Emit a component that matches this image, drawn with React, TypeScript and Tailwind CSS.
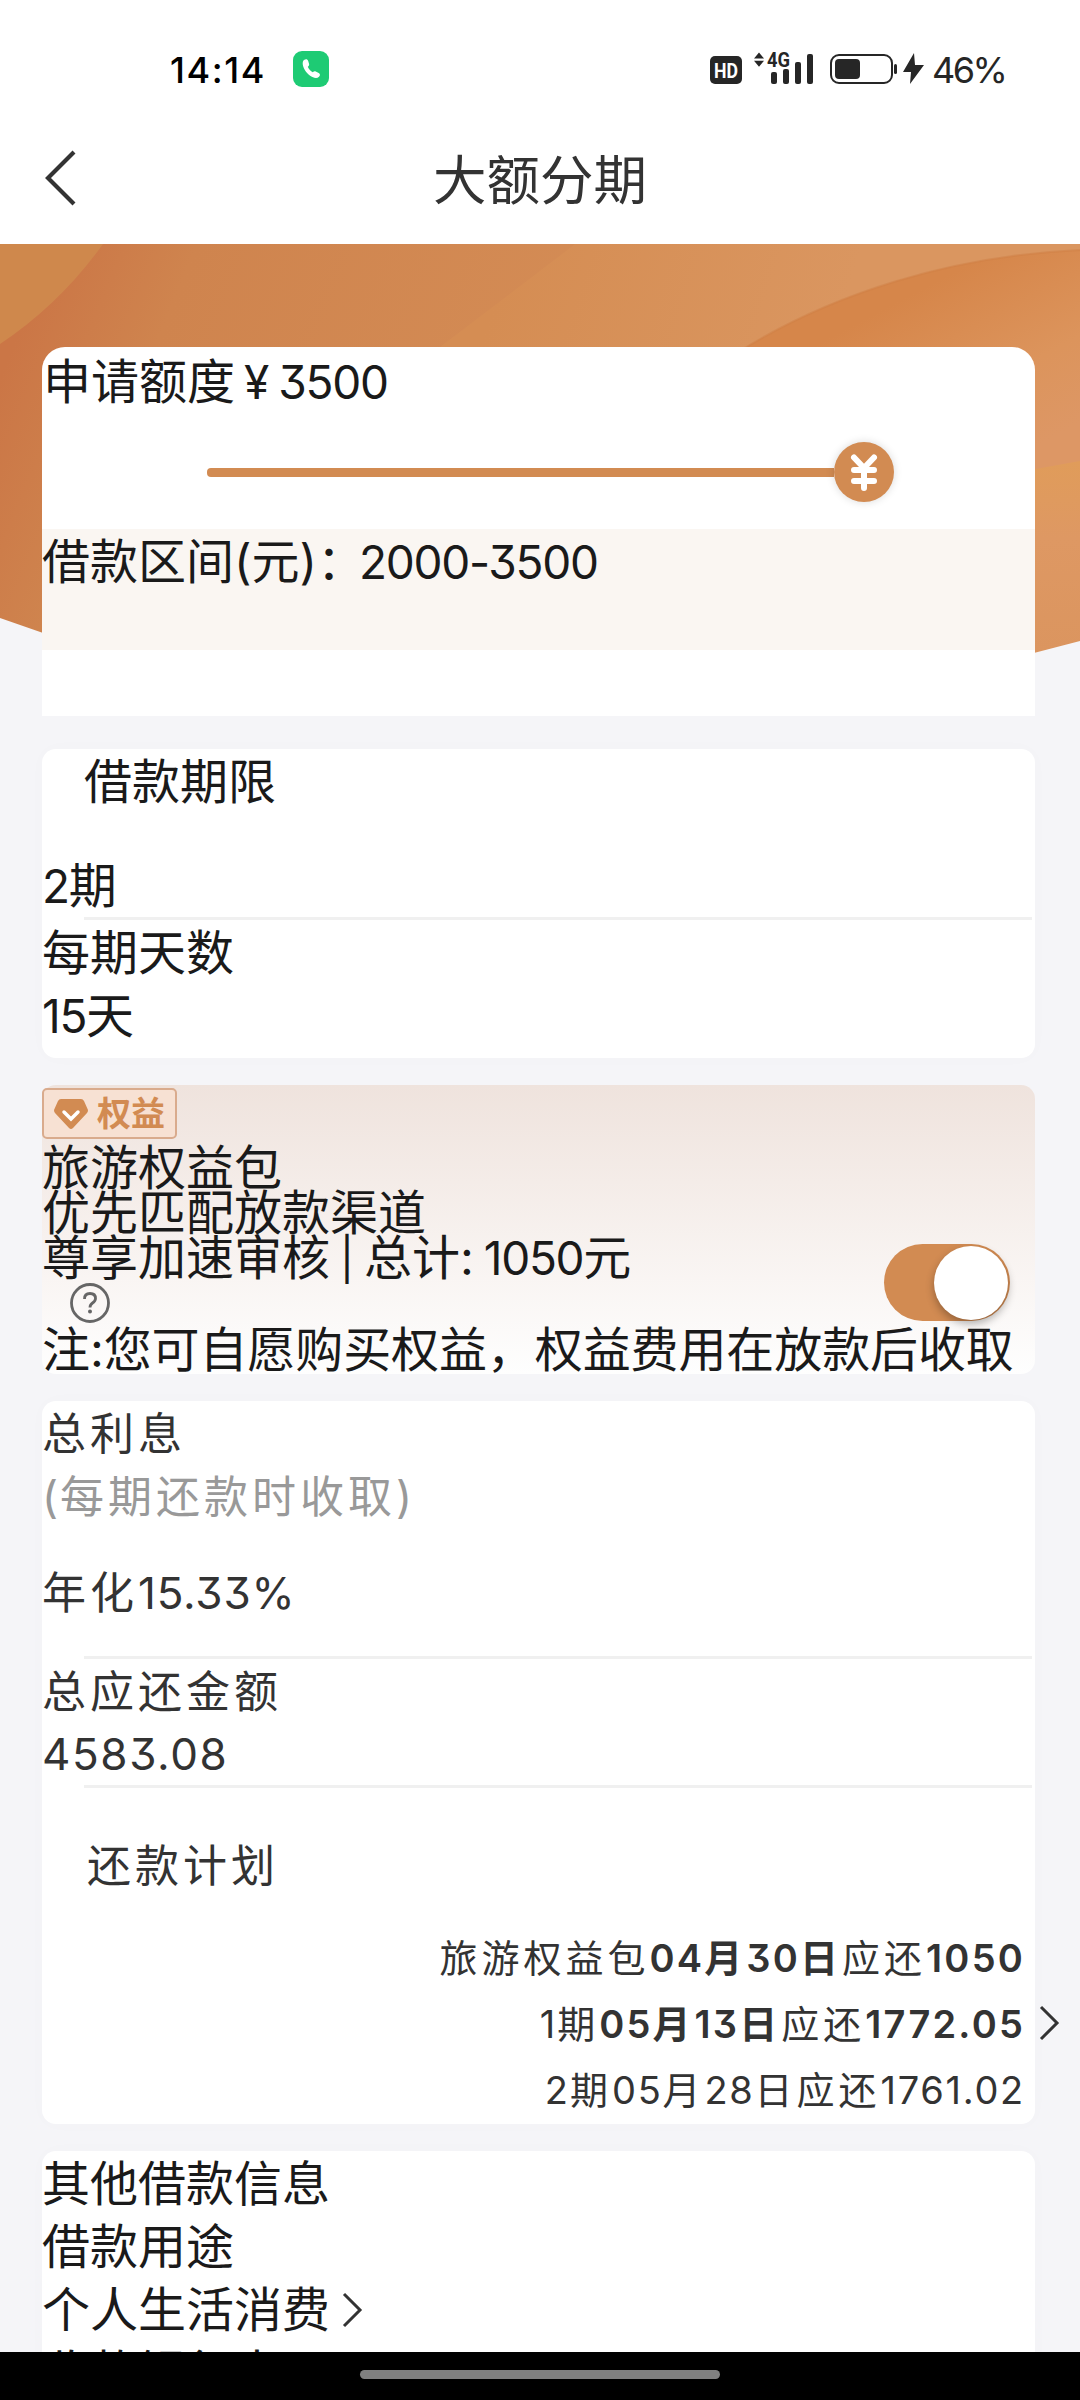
import type { ReactNode } from 'react'

type PlanRow = {
  label: string
  date: string
  amount: string
  pending: boolean
}

const planRows: PlanRow[] = [
  { label: '旅游权益包', date: '04月30日', amount: '1050', pending: true },
  { label: '1期', date: '05月13日', amount: '1772.05', pending: true },
  { label: '2期', date: '05月28日', amount: '1761.02', pending: false },
]

// Latin figures are set a little tighter than the surrounding Chinese text.
function Figures({ text, className = 'text-[46px] tracking-[-1.300px]' }: { text: string; className?: string }) {
  return text.split(/([\d.%-]+)/).map((part, index) =>
    index % 2 === 1 ? (
      <span key={index} className={className}>
        {part}
      </span>
    ) : (
      part
    ),
  )
}

function StatusBar() {
  return (
    <div className="flex h-[138px] items-start bg-white pt-[50px]">
      <span className="ml-[170px] w-[123px] text-[36px] leading-[40px] font-medium tracking-[1.600px] text-black">14:14</span>
      <svg className="mt-px" width="36" height="36" viewBox="0 0 36 36">
        <rect width="36" height="36" rx="9" fill="#1ecb74" />
        <path
          d="M11 9c2-1.5 3.500-1 4.200 1l.9 3c.3 1.200-.4 2-1.300 2.700 1 2.400 2.800 4.400 5 5.600.8-.9 1.800-1.400 2.900-.9l3 1.500c1.600.9 1.700 2.600.3 3.900-1.600 1.500-3.800 1.600-6.600.2-5-2.500-8.800-7.500-9.600-12.300-.3-2.200.1-3.800 1.200-4.700z"
          fill="#fff"
        />
      </svg>
      <svg className="ml-[381px]" width="216" height="40" viewBox="710 48 216 40" overflow="visible">
        <rect x="710" y="54" width="32" height="28" rx="5" fill="#262626" />
        <text
          x="714"
          y="75.500"
          fontFamily="Roboto"
          fontWeight="700"
          fontSize="21"
          textLength="24"
          lengthAdjust="spacingAndGlyphs"
          fill="#fff"
        >
          HD
        </text>
        <path d="M754 56.500l5-6 5 6zM754 58.800h10l-5 6z" fill="#262626" />
        <text
          x="767"
          y="65"
          fontFamily="Roboto"
          fontWeight="700"
          fontSize="20"
          textLength="23"
          lengthAdjust="spacingAndGlyphs"
          fill="#262626"
        >
          4G
        </text>
        <rect x="771" y="70" width="6" height="12" rx="2" fill="#262626" />
        <rect x="783" y="67" width="6" height="15" rx="2" fill="#262626" />
        <rect x="795" y="60" width="6" height="22" rx="2" fill="#262626" />
        <rect x="807" y="52" width="6" height="30" rx="2" fill="#262626" />
        <rect x="831" y="53" width="61" height="28" rx="8" fill="none" stroke="#262626" strokeWidth="2" />
        <rect x="835" y="57" width="25" height="20" rx="4" fill="#262626" />
        <rect x="894" y="62" width="3" height="10" rx="1.500" fill="#262626" />
        <path d="M914 51l-11 19h8l-1 12 14-19h-9z" fill="#262626" />
      </svg>
      <span className="ml-[6px] text-[36px] leading-[40px] tracking-[-2.500px] text-[#262626]">46%</span>
    </div>
  )
}

function TitleBar() {
  return (
    <header className="grid h-[106px] grid-cols-3 items-center bg-white pb-[22px]">
      <svg className="-mt-[4px] ml-[44px]" width="34" height="60" viewBox="0 0 34 60">
        <path d="M30 4L4 30l26 26" fill="none" stroke="#333" strokeWidth="4.200" />
      </svg>
      <h1 className="mt-[2px] text-center text-[53.500px] leading-[60px] whitespace-nowrap text-[#333]">大额分期</h1>
    </header>
  )
}

function Chevron({ className }: { className?: string }) {
  return (
    <svg className={className} width="22" height="36" viewBox="0 0 22 36">
      <path d="M2 2l16 16L2 34" fill="none" stroke="#333" strokeWidth="3" />
    </svg>
  )
}

function BannerArt() {
  return (
    <svg className="col-start-1 row-start-1" width="1080" height="410" viewBox="0 0 1080 410">
      <defs>
        <linearGradient id="band" gradientUnits="userSpaceOnUse" x1="30" y1="60" x2="520" y2="260">
          <stop offset="0" stopColor="#cb7646" />
          <stop offset="0.250" stopColor="#cf844e" />
          <stop offset="1" stopColor="#d48c55" />
        </linearGradient>
        <linearGradient id="mid" gradientUnits="userSpaceOnUse" x1="500" y1="40" x2="820" y2="140">
          <stop offset="0" stopColor="#d58d53" />
          <stop offset="1" stopColor="#da9660" />
        </linearGradient>
        <linearGradient id="disc" gradientUnits="userSpaceOnUse" x1="950" y1="30" x2="1040" y2="200">
          <stop offset="0" stopColor="#d6864a" />
          <stop offset="0.600" stopColor="#dc945c" />
          <stop offset="1" stopColor="#dd9765" />
        </linearGradient>
        <linearGradient id="glow" x1="0" y1="0" x2="0" y2="1">
          <stop offset="0" stopColor="#e09c5a" />
          <stop offset="0.400" stopColor="#de9863" />
          <stop offset="1" stopColor="#db955f" />
        </linearGradient>
      </defs>
      <rect width="1080" height="410" fill="#cf884c" />
      <path d="M103 0Q60 60 0 100V410H1080V0z" fill="url(#band)" />
      <path d="M575 0Q510 50 440 103V410H1080V0z" fill="url(#mid)" />
      <path d="M1080 6C950 12 830 50 735 110V410H1080z" fill="url(#disc)" />
      <path d="M1080 6C950 12 830 50 735 110" fill="none" stroke="#cf7f45" strokeWidth="2" opacity="0.500" />
      <path d="M1080 217L1030 226V410H1080z" fill="url(#glow)" />
      <path d="M0 374L46 390V410H0zM1080 397L1030 410H1080z" fill="#f5f5f8" />
    </svg>
  )
}

function AmountCard() {
  return (
    <section className="col-start-1 row-start-1 mx-[42px] mt-[103px] h-[369px] w-[993px] rounded-t-[23px] bg-white">
      <div className="flex h-[70px] items-center pl-px">
        申请额度<span className="ml-[9px] text-[46px]">¥</span>
        <span className="ml-[9px]">
          <Figures text="3500" />
        </span>
      </div>
      <div className="flex h-[112px] items-center pb-[2px] pl-[165px]">
        <div className="h-[9px] w-[627px] rounded-l-[4px] bg-[#d28b52]" />
        <div className="flex size-[60px] items-center justify-center rounded-full bg-[#d28b52] shadow-[0_0_8px_rgba(0,0,0,0.15)]">
          <svg width="30" height="40" viewBox="0 0 30 40">
            <path
              d="M5 5.500l10 10.500 10-10.500M15 16v20M5 18h20M5 29h20"
              fill="none"
              stroke="#fff"
              strokeWidth="6"
              strokeLinecap="round"
            />
          </svg>
        </div>
      </div>
      <div className="h-[121px] bg-[#faf6f2] pt-[3px]">
        <p className="leading-[60px]">
          借款区间(元)：
          <span className="ml-[-6px]">
            <Figures text="2000-3500" />
          </span>
        </p>
      </div>
    </section>
  )
}

function Card({ className, children }: { className?: string; children: ReactNode }) {
  return (
    <section className={`mx-[42px] w-[993px] rounded-[14px] bg-white shadow-[0_0_20px_rgba(0,0,0,0.015)] ${className}`}>
      {children}
    </section>
  )
}

function Divider() {
  return <div className="mr-[3px] ml-[42px] h-[3px] bg-[#f0f0f0]" />
}

function TermCard() {
  return (
    <Card className="mt-[33px] h-[309px] pt-px">
      <p className="pl-[42px] leading-[64px]">借款期限</p>
      <p className="mt-[41px] h-[62px] leading-[62px]">
        <Figures text="2期" />
      </p>
      <Divider />
      <p className="pt-px leading-[64px]">每期天数</p>
      <p className="leading-[61px]">
        <Figures text="15天" />
      </p>
    </Card>
  )
}

function BenefitCard() {
  return (
    <section className="mx-[42px] mt-[27px] h-[289px] w-[993px] rounded-[14px] bg-gradient-to-b from-[#efe3dd] to-[#fefefe] pt-[3px]">
      <div className="flex h-[51px] w-[135px] items-center rounded-[5px] border-2 border-[#d9ab8d] bg-[#f7e1d3] pl-[9px]">
        <svg width="36" height="34" viewBox="0 0 36 34">
          <path d="M8 2h20q2 0 3 2l4 9q0 2-1 3L20 31q-2 2-4 0L2 16q-1-1-1-3l4-9q1-2 3-2z" fill="#d28b52" />
          <path d="M11 15l7 7 7-7" fill="none" stroke="#fff" strokeWidth="3.500" strokeLinecap="round" />
        </svg>
        <span className="ml-[8px] text-[34px] leading-[40px] font-bold text-[#d28b52]">权益</span>
      </div>
      <div className="mt-[6px] flex h-[182px]">
        <div className="w-[842px] leading-[45px]">
          <p>旅游权益包</p>
          <p>优先匹配放款渠道</p>
          <p className="[word-spacing:-3.500px]">
            尊享加速审核 <span className="inline-block -translate-y-px text-[42px]">|</span> <Figures text="总计: 1050元" />
          </p>
          <svg className="mt-px ml-[28px]" width="40" height="40" viewBox="0 0 40 40">
            <circle cx="20" cy="20" r="18.500" fill="none" stroke="#666" strokeWidth="2.800" />
            <path d="M14.500 16q0-5.500 5.500-5.500t5.500 5q0 2.500-3 4.500-2.500 1.700-2.500 4.500" fill="none" stroke="#666" strokeWidth="2.800" />
            <circle cx="20" cy="28.500" r="2" fill="#666" />
          </svg>
        </div>
        <button
          type="button"
          role="switch"
          aria-checked="true"
          className="mt-[99px] flex h-[77px] w-[126px] items-center justify-end rounded-full bg-[#d28b52] pr-[2px]"
        >
          <span className="size-[74px] rounded-full bg-white shadow-[0_4px_8px_rgba(0,0,0,0.3)]" />
        </button>
      </div>
      <p className="leading-[45px] tracking-[-0.100px] whitespace-nowrap">注:您可自愿购买权益，权益费用在放款后收取</p>
    </section>
  )
}

function RepaymentCard() {
  return (
    <Card className="mt-[27px] h-[723px] pt-px text-[44px] tracking-[4px] text-[#333]">
      <p className="leading-[64px]">总利息</p>
      <p className="leading-[63px] text-[#999]">
        <span className="tracking-[2px]">(</span>每期还款时收取)
      </p>
      <p className="h-[127px] pt-[32px] leading-[64px]">
        <Figures text="年化15.33%" className="tracking-[0.800px]" />
      </p>
      <Divider />
      <p className="pt-px leading-[64px]">总应还金额</p>
      <p className="h-[61px] leading-[60px]">
        <Figures text="4583.08" className="tracking-[1.600px]" />
      </p>
      <Divider />
      <p className="pt-[46px] pl-[45px] leading-[64px]">还款计划</p>
      <div className="mt-[27px] -mr-[26px] flex items-center justify-end gap-[14px]">
        <div className="text-right text-[38px] leading-[66px] whitespace-nowrap">
          {planRows.map((row) => {
            const weight = row.pending ? 'font-semibold' : ''
            const figures = row.pending ? 'tracking-[2.200px]' : 'tracking-[1.700px]'
            return (
              <p key={row.label}>
                <Figures text={row.label} className="tracking-[2px]" />
                <span className={weight}>
                  <Figures text={row.date} className={figures} />
                </span>
                应还
                <span className={weight}>
                  <Figures text={row.amount} className={figures} />
                </span>
              </p>
            )
          })}
        </div>
        <Chevron className="-mt-[3px]" />
      </div>
    </Card>
  )
}

function OtherInfoCard() {
  return (
    <Card className="mt-[27px] h-[260px] pt-px leading-[63px]">
      <p>其他借款信息</p>
      <p>借款用途</p>
      <p className="flex items-center">
        个人生活消费
        <Chevron className="ml-[12px]" />
      </p>
      <p>收款银行卡</p>
    </Card>
  )
}

export default function App() {
  return (
    <div className="flex h-[2400px] w-[1080px] flex-col overflow-hidden bg-[#f5f5f8] font-['Inter','Noto_Sans_CJK_SC',sans-serif] text-[48px] text-[#1a1a1a] [font-feature-settings:'cv09']">
      <StatusBar />
      <TitleBar />
      <main className="h-[2108px] overflow-hidden">
        <div className="grid items-start">
          <BannerArt />
          <AmountCard />
        </div>
        <TermCard />
        <BenefitCard />
        <RepaymentCard />
        <OtherInfoCard />
      </main>
      <div className="flex h-[48px] justify-center bg-black pt-[18px]">
        <div className="h-[9px] w-[360px] rounded-full bg-[#808080]" />
      </div>
    </div>
  )
}
